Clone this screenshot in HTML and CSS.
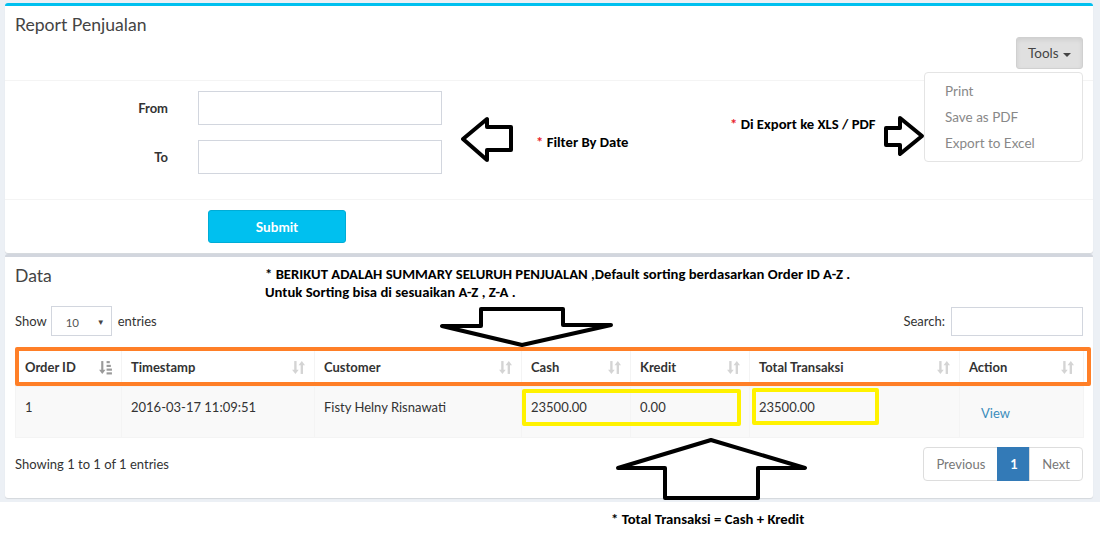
FILE: index.html
```html
<!DOCTYPE html>
<html lang="id">
<head>
<meta charset="utf-8">
<title>Report Penjualan</title>
<link rel="stylesheet" href="styles.css">
</head>
<body>
<div class="content">
  <section class="box box-report">
    <div class="box-header with-border">
      <h3 class="box-title">Report Penjualan</h3>
      <div class="tools">
        <button class="btn-tools" type="button">Tools <span class="caret"></span></button>
        <ul class="dropdown-menu">
          <li>Print</li>
          <li>Save as PDF</li>
          <li>Export to Excel</li>
        </ul>
      </div>
    </div>
    <div class="box-body">
      <form class="filter-form">
        <div class="form-row"><label class="control-label">From</label><input class="form-control" type="text"></div>
        <div class="form-row"><label class="control-label">To</label><input class="form-control" type="text"></div>
      </form>
    </div>
    <div class="box-footer">
      <button class="btn-submit" type="button">Submit</button>
    </div>
  </section>

  <section class="box box-data">
    <div class="box-header">
      <h3 class="box-title">Data</h3>
    </div>
    <div class="box-body">
      <div class="dt-top">
        <div class="dt-length">Show <span class="select-box"><span>10</span><span class="select-arrow">&#9660;</span></span> entries</div>
        <div class="dt-filter">Search: <input class="search-input" type="text"></div>
      </div>
      <table class="data-table">
        <colgroup>
          <col class="c-id"><col class="c-ts"><col class="c-cust"><col class="c-cash"><col class="c-kredit"><col class="c-total"><col class="c-action">
        </colgroup>
        <thead>
          <tr>
            <th>Order ID<svg class="sort sort-active" viewBox="0 0 12 14" width="13" height="15"><rect x="2" y="1" width="2" height="9"/><path d="M0 9h6l-3 4z"/><rect x="7" y="1" width="3" height="2"/><rect x="7" y="4.5" width="4" height="2"/><rect x="7" y="8" width="5" height="2"/><rect x="7" y="11.5" width="5" height="2"/></svg></th>
            <th>Timestamp<svg class="sort" viewBox="0 0 12 14" width="13" height="15"><rect x="2" y="1" width="2.2" height="9"/><path d="M0 9h6.2l-3.1 4z"/><rect x="8" y="4" width="2.2" height="9"/><path d="M6 5h6.2l-3.1-4z"/></svg></th>
            <th>Customer<svg class="sort" viewBox="0 0 12 14" width="13" height="15"><rect x="2" y="1" width="2.2" height="9"/><path d="M0 9h6.2l-3.1 4z"/><rect x="8" y="4" width="2.2" height="9"/><path d="M6 5h6.2l-3.1-4z"/></svg></th>
            <th>Cash<svg class="sort" viewBox="0 0 12 14" width="13" height="15"><rect x="2" y="1" width="2.2" height="9"/><path d="M0 9h6.2l-3.1 4z"/><rect x="8" y="4" width="2.2" height="9"/><path d="M6 5h6.2l-3.1-4z"/></svg></th>
            <th>Kredit<svg class="sort" viewBox="0 0 12 14" width="13" height="15"><rect x="2" y="1" width="2.2" height="9"/><path d="M0 9h6.2l-3.1 4z"/><rect x="8" y="4" width="2.2" height="9"/><path d="M6 5h6.2l-3.1-4z"/></svg></th>
            <th>Total Transaksi<svg class="sort" viewBox="0 0 12 14" width="13" height="15"><rect x="2" y="1" width="2.2" height="9"/><path d="M0 9h6.2l-3.1 4z"/><rect x="8" y="4" width="2.2" height="9"/><path d="M6 5h6.2l-3.1-4z"/></svg></th>
            <th>Action<svg class="sort" viewBox="0 0 12 14" width="13" height="15"><rect x="2" y="1" width="2.2" height="9"/><path d="M0 9h6.2l-3.1 4z"/><rect x="8" y="4" width="2.2" height="9"/><path d="M6 5h6.2l-3.1-4z"/></svg></th>
          </tr>
        </thead>
        <tbody>
          <tr>
            <td>1</td>
            <td>2016-03-17 11:09:51</td>
            <td>Fisty Helny Risnawati</td>
            <td>23500.00</td>
            <td>0.00</td>
            <td>23500.00</td>
            <td><a class="btn-link" href="#">View</a></td>
          </tr>
        </tbody>
      </table>
      <div class="dt-bottom">
        <div class="dt-info">Showing 1 to 1 of 1 entries</div>
        <ul class="pagination">
          <li class="pg-item disabled">Previous</li>
          <li class="pg-item active">1</li>
          <li class="pg-item disabled">Next</li>
        </ul>
      </div>
    </div>
  </section>
</div>

<svg class="annotations" width="1100" height="551" viewBox="0 0 1100 551">
  <g fill="none" stroke-width="4" stroke-linejoin="round">
    <rect x="17" y="349" width="1072" height="35" stroke="#ff7f27"/>
    <rect x="524" y="391" width="215" height="33" stroke="#fff200"/>
    <rect x="754" y="390" width="123" height="33" stroke="#fff200"/>
    <polygon points="463,139 487,119 487,127 511,127 511,150 487,150 487,160" stroke="#000"/>
    <polygon points="886,128 900,128 900,118 922,136 900,154 900,145 886,145" stroke="#000"/>
    <polygon points="442,326 481,326 481,309 563,309 563,325 611,325 522,345" stroke="#000"/>
    <polygon points="711,440 805,468 758,468 758,498 665,498 665,468 618,468" stroke="#000"/>
  </g>
</svg>
<p class="note note-filter"><span class="star">*</span> Filter By Date</p>
<p class="note note-export"><span class="star">*</span> Di Export ke XLS / PDF</p>
<p class="note note-summary">* BERIKUT ADALAH SUMMARY SELURUH PENJUALAN ,Default sorting berdasarkan Order ID A-Z .<br>Untuk Sorting bisa di sesuaikan A-Z , Z-A .</p>
<p class="note note-total">* Total Transaksi = Cash + Kredit</p>
</body>
</html>
```

FILE: styles.css
```css
* { box-sizing: border-box; }
html, body { margin: 0; padding: 0; }
body {
  width: 1100px;
  height: 551px;
  overflow: hidden;
  position: relative;
  background: #fff;
  font-family: "Source Sans Pro", "Lato", "Liberation Sans", sans-serif;
  font-size: 13px;
  color: #333;
}
.content {
  background: #ecf0f5;
  padding: 3px 7px 4px 5px;
}
.box {
  position: relative;
  background: #fff;
  border-top: 3px solid #d2d6de;
  border-radius: 3px;
  box-shadow: 0 1px 1px rgba(0, 0, 0, 0.1);
}
.box-report { border-top-color: #00c0ef; margin-bottom: 1px; }
.box-header { padding: 10px 10px 10px; }
.box-header.with-border { border-bottom: 1px solid #f4f4f4; padding-bottom: 11px; }
.box-title {
  margin: 0;
  font-size: 17.6px;
  line-height: 18px;
  font-weight: normal;
  color: #444;
}
.tools {
  position: relative;
  display: flex;
  justify-content: flex-end;
  margin-top: 3px;
}
.btn-tools {
  height: 32px;
  width: 67px;
  padding: 0 8px;
  font-family: inherit;
  font-size: 13.5px;
  color: #444;
  background: #e0e0e0;
  border: 1px solid #d0d0d0;
  border-radius: 3px;
  box-shadow: inset 0 2px 4px rgba(0, 0, 0, 0.08);
}
.caret {
  display: inline-block;
  width: 0;
  height: 0;
  margin-left: 1px;
  vertical-align: middle;
  border-top: 4px solid #444;
  border-left: 4px solid transparent;
  border-right: 4px solid transparent;
}
.dropdown-menu {
  position: absolute;
  top: 35px;
  right: 0;
  z-index: 5;
  width: 159px;
  margin: 0;
  padding: 5px 0;
  list-style: none;
  background: #fff;
  border: 1px solid #e4e4e4;
  border-radius: 4px;
  font-size: 13.5px;
}
.dropdown-menu li {
  padding: 3px 20px;
  line-height: 20px;
  color: #888;
}
.box-body { padding: 10px; }
.filter-form { margin: 0; }
.form-row {
  display: flex;
  align-items: center;
  margin-bottom: 15px;
}
.control-label {
  width: 153px;
  margin-right: 30px;
  text-align: right;
  font-weight: bold;
  font-size: 13px;
  color: #333;
}
.form-control {
  width: 244px;
  height: 34px;
  border: 1px solid #d2d6de;
  border-radius: 0;
  padding: 6px 12px;
  font-family: inherit;
}
.box-footer {
  border-top: 1px solid #f4f4f4;
  padding: 10px;
}
.btn-submit {
  display: block;
  margin-left: 193px;
  width: 138px;
  height: 33px;
  background: #00c0ef;
  border: 1px solid #00acd6;
  border-radius: 3px;
  color: #fff;
  font-family: inherit;
  font-weight: bold;
  font-size: 13.5px;
}
.dt-top {
  display: flex;
  justify-content: space-between;
  align-items: center;
  height: 32px;
}
.dt-length, .dt-filter { display: flex; align-items: center; }
.select-box {
  display: inline-flex;
  align-items: center;
  justify-content: space-between;
  width: 61px;
  height: 30px;
  margin: 0 6px 0 4px;
  padding: 2px 6px 0 14px;
  border: 1px solid #d2d6de;
  font-size: 11.5px;
  color: #555;
}
.select-arrow { font-size: 8px; color: #444; }
.search-input {
  width: 132px;
  height: 29px;
  margin-left: 6px;
  border: 1px solid #d2d6de;
}
.data-table {
  width: 1068px;
  margin-top: 11px;
  margin-bottom: 8px;
  border-collapse: collapse;
  table-layout: fixed;
}
.c-id { width: 106px; }
.c-ts { width: 193px; }
.c-cust { width: 207px; }
.c-cash { width: 109px; }
.c-kredit { width: 119px; }
.c-total { width: 210px; }
.c-action { width: 124px; }
.data-table th, .data-table td {
  border: 1px solid #f4f4f4;
  padding: 8px 9px;
  line-height: 20px;
  text-align: left;
  vertical-align: top;
}
.data-table td { padding-top: 10px; }
.data-table th {
  position: relative;
  border-bottom-width: 2px;
  font-weight: bold;
}
.data-table tbody tr { background: #f9f9f9; }
.sort {
  position: absolute;
  right: 9px;
  top: 11px;
  fill: #d4d4d4;
}
.sort-active { fill: #9a9a9a; }
.btn-link {
  display: inline-block;
  padding: 6px 12px;
  line-height: 20px;
  color: #3c8dbc;
  text-decoration: none;
}
.dt-bottom {
  display: flex;
  justify-content: space-between;
  align-items: center;
  height: 36px;
  margin-bottom: 6px;
}
.pagination {
  display: flex;
  margin: 0;
  padding: 0;
  list-style: none;
}
.pg-item {
  height: 34px;
  padding: 6px 12px;
  line-height: 20px;
  border: 1px solid #ddd;
  margin-left: -1px;
  color: #777;
  background: #fff;
}
.pg-item:first-child { border-radius: 4px 0 0 4px; }
.pg-item:last-child { border-radius: 0 4px 4px 0; }
.pg-item.active {
  background: #337ab7;
  border-color: #337ab7;
  color: #fff;
  font-weight: bold;
  width: 33px;
  text-align: center;
}
.annotations {
  position: absolute;
  left: 0;
  top: 0;
  pointer-events: none;
}
.note {
  position: absolute;
  margin: 0;
  font-family: "Carlito", "Lato", "Liberation Sans", sans-serif;
  font-weight: bold;
  font-size: 14.7px;
  line-height: 18px;
  color: #000;
  white-space: nowrap;
}
.star { color: #e8202a; }
.note-filter { left: 536px; top: 133px; }
.note-export { left: 730px; top: 115px; }
.note-summary { left: 265px; top: 265px; }
.note-total { left: 611px; top: 510px; }
```
